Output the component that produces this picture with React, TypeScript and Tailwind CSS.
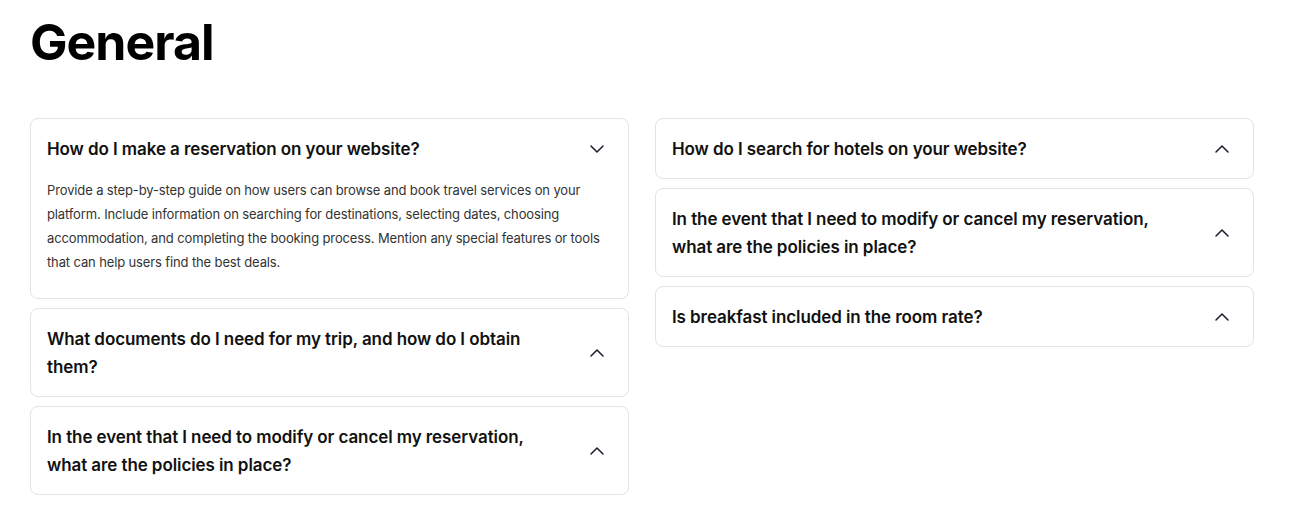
import { ChevronDown, ChevronUp } from "lucide-react";

type Faq = { q: string; a?: string; open?: boolean };

const left: Faq[] = [
  {
    q: "How do I make a reservation on your website?",
    a: "Provide a step-by-step guide on how users can browse and book travel services on your platform. Include information on searching for destinations, selecting dates, choosing accommodation, and completing the booking process. Mention any special features or tools that can help users find the best deals.",
    open: true,
  },
  { q: "What documents do I need for my trip, and how do I obtain them?" },
  { q: "In the event that I need to modify or cancel my reservation, what are the policies in place?" },
];

const right: Faq[] = [
  { q: "How do I search for hotels on your website?" },
  { q: "In the event that I need to modify or cancel my reservation, what are the policies in place?" },
  { q: "Is breakfast included in the room rate?" },
];

function Item({ item }: { item: Faq }) {
  return (
    <div className="rounded-lg border border-[#e3e3e3] bg-white">
      <div className="flex items-center justify-between pt-4 pb-[15px] pl-4 pr-[19px]">
        <p className="max-w-[490px] text-[17px] font-semibold leading-7 tracking-[-0.005em] text-[#111]">{item.q}</p>
        {item.open ? (
          <ChevronDown size={24} strokeWidth={1.5} className="shrink-0 text-[#1b1b2b]" />
        ) : (
          <ChevronUp size={24} strokeWidth={1.5} className="shrink-0 text-[#1b1b2b]" />
        )}
      </div>
      {item.open && (
        <p className="px-4 pb-[24px] text-[13px] leading-6 tracking-[-0.01em] text-[#333]">{item.a}</p>
      )}
    </div>
  );
}

export default function App() {
  return (
    <div className="min-h-screen bg-white pl-[30px] pt-[12px]" style={{ fontFamily: "Inter, 'Noto Sans', sans-serif" }}>
      <h1 className="text-[50px] font-bold leading-[60px] tracking-[-0.02em] text-black">General</h1>
      <div className="mt-[46px] grid w-[1224px] grid-cols-2 items-start gap-[26px]">
        <div className="flex flex-col gap-[9px]">
          {left.map((f, i) => (
            <Item key={i} item={f} />
          ))}
        </div>
        <div className="flex flex-col gap-[9px]">
          {right.map((f, i) => (
            <Item key={i} item={f} />
          ))}
        </div>
      </div>
    </div>
  );
}
